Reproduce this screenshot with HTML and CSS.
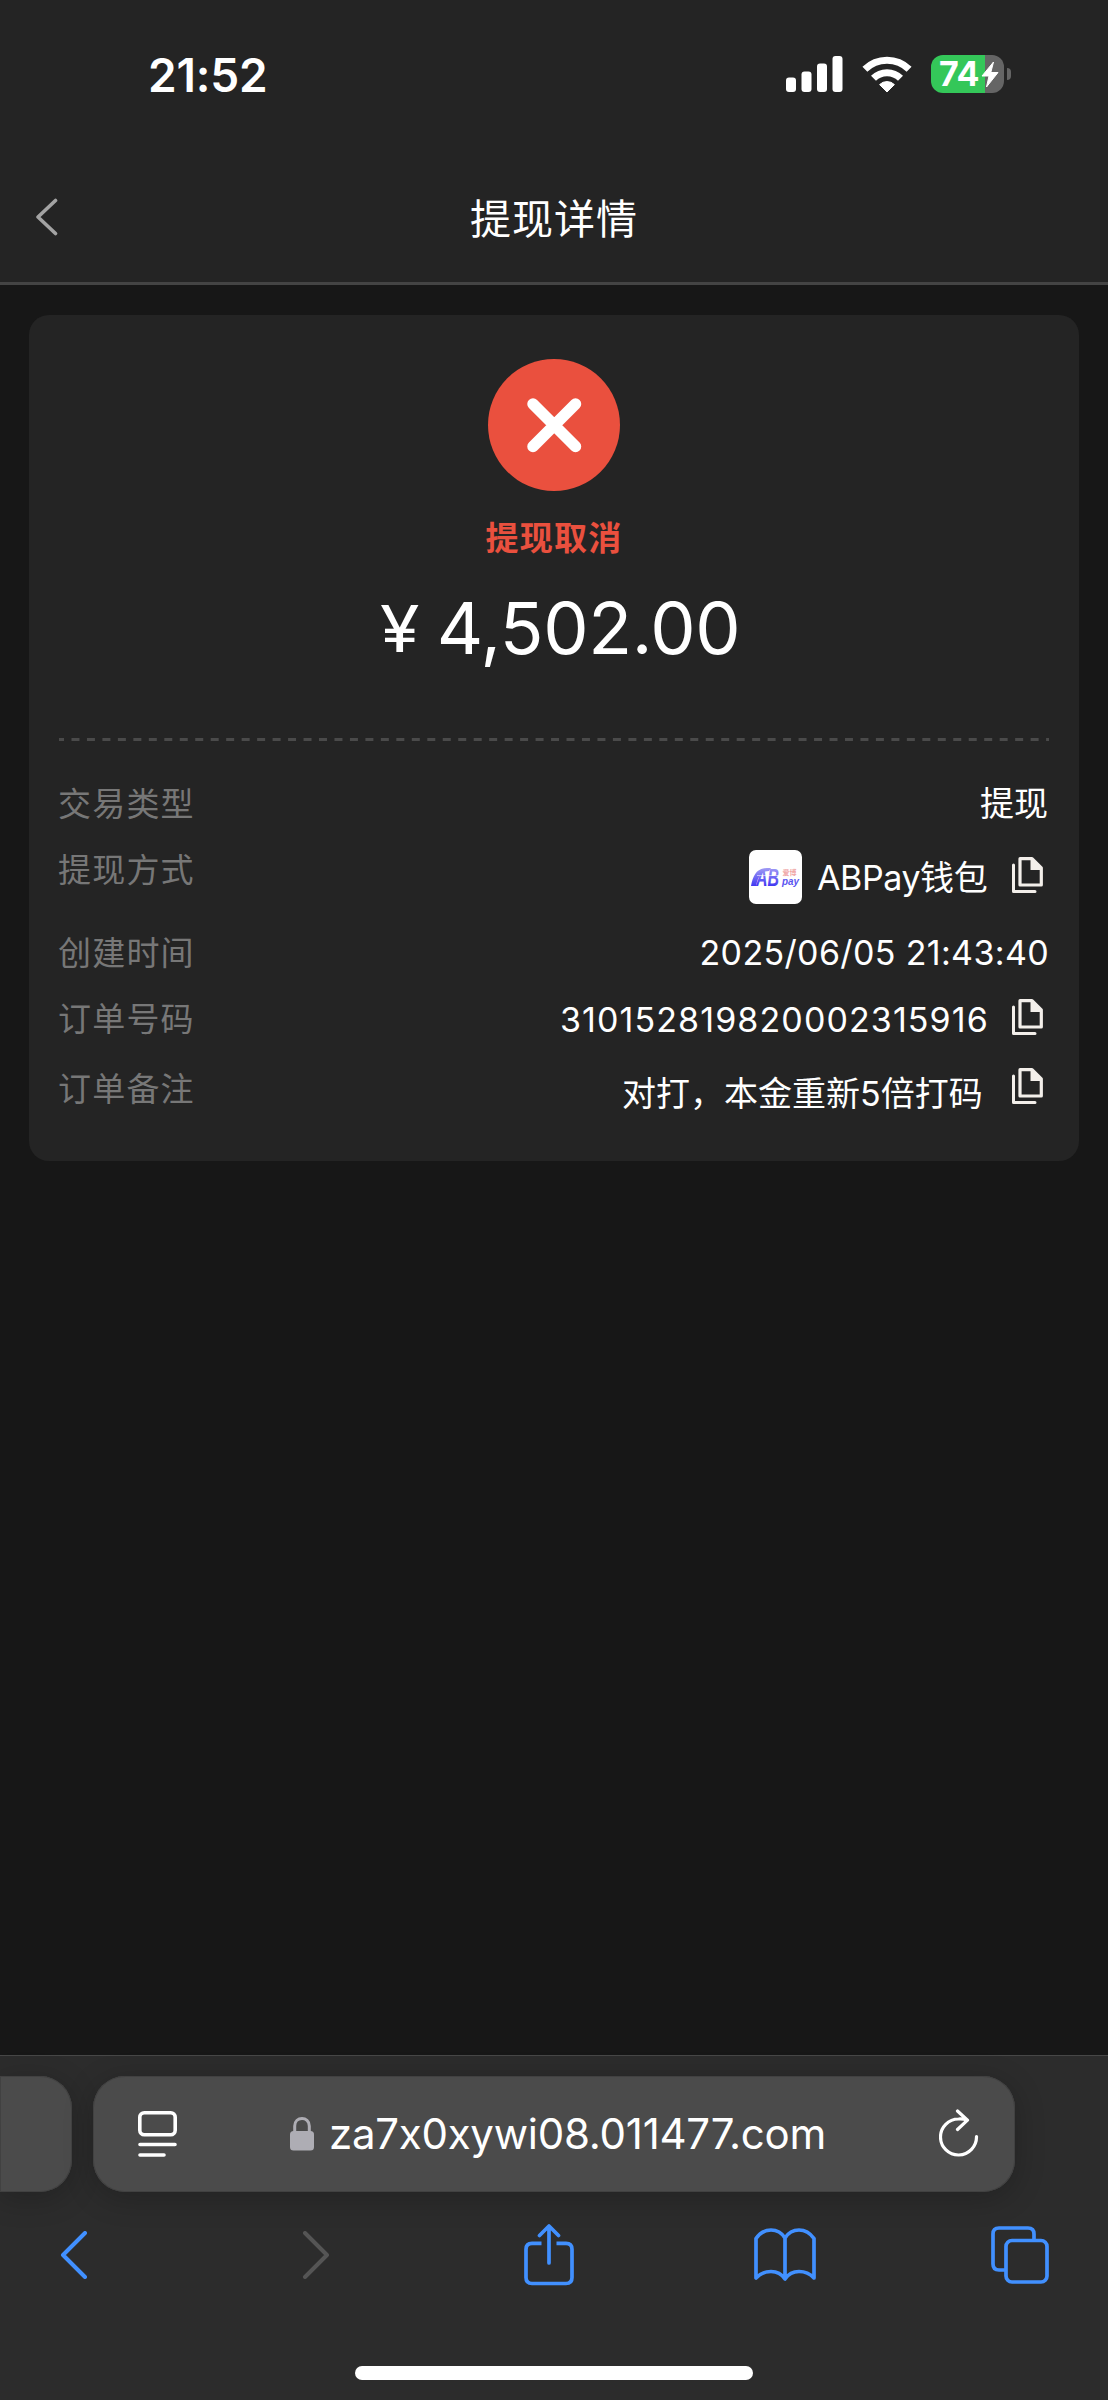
FILE: index.html
```html
<!DOCTYPE html>
<html lang="zh-CN">
<head>
<meta charset="utf-8">
<title>提现详情</title>
<link rel="stylesheet" href="styles.css">
</head>
<body>
<svg width="0" height="0" class="defs">
  <symbol id="copy" viewBox="0 0 31 36">
    <path d="M1.5 8V34.5H23" fill="none" stroke="currentColor" stroke-width="3" stroke-linecap="round" stroke-linejoin="round"/>
    <path d="M8 1.7H20L29.3 11V28H8Z" fill="none" stroke="currentColor" stroke-width="3.2" stroke-linejoin="round"/>
    <path d="M18.5 1.7H20.5L29.5 11V13H18.5Z" fill="currentColor"/>
  </symbol>
</svg>
<header class="top">
  <div class="status">
    <span class="time">21:52</span>
    <div class="status-icons">
      <svg class="signal" width="57" height="36" viewBox="0 0 57 36" fill="#fff">
        <rect x="0" y="21.500" width="10" height="14.500" rx="3"/><rect x="15.500" y="15.500" width="10" height="20.500" rx="3"/><rect x="31" y="7.500" width="10" height="28.500" rx="3"/><rect x="46.500" y="0" width="10" height="36" rx="3"/>
      </svg>
      <svg class="wifi" width="50" height="37" viewBox="0 0 50 37">
        <g fill="none" stroke="#fff" stroke-width="7"><path d="M2.900 13.200A31.500 31.500 0 0 1 47.100 13.200"/><path d="M11.500 22.300A19 19 0 0 1 38.500 22.300"/></g>
        <path d="M25 36L17.600 28.600A10.500 10.500 0 0 1 32.400 28.600Z" fill="#fff" stroke="#fff" stroke-width="1" stroke-linejoin="round"/>
      </svg>
      <div class="battery">
        <span class="level">74</span>
        <svg width="18" height="27" viewBox="0 0 18 27"><path d="M12.500 1L1 15H8L5.500 26L17 11.500H9.800Z" fill="#fff" stroke="#fff" stroke-linejoin="round"/></svg>
      </div>
      <span class="nub"></span>
    </div>
  </div>
  <nav class="title-bar">
    <svg width="24" height="38" viewBox="0 0 24 38"><path d="M20.500 2.500L3 19L20.500 35.500" fill="none" stroke="#a3a3a3" stroke-width="3.600" stroke-linecap="round" stroke-linejoin="round"/></svg>
    <h1>提现详情</h1>
    <span class="spacer"></span>
  </nav>
</header>
<main>
  <section class="card">
    <svg class="badge" width="132" height="132" viewBox="0 0 132 132"><circle cx="66" cy="66" r="66" fill="#ea503e"/><path d="M45 45L87.500 87.500M87.500 45L45 87.500" stroke="#fff" stroke-width="11.500" stroke-linecap="round"/></svg>
    <p class="state">提现取消</p>
    <p class="amount"><span class="yen">¥</span><span>4,502.00</span></p>
    <svg class="rule" width="990" height="3"><line x1="-3" y1="1.500" x2="990" y2="1.500" stroke="#4a4a4a" stroke-width="3" stroke-dasharray="8 7.470"/></svg>
    <dl>
      <div class="row r1"><dt>交易类型</dt><dd class="kind">提现</dd></div>
      <div class="row r2"><dt>提现方式</dt><dd>
        <svg class="wallet" width="53" height="54" viewBox="0 0 53 54">
          <defs><linearGradient id="g" gradientUnits="userSpaceOnUse" x1="0" y1="18" x2="0" y2="36"><stop offset="0" stop-color="#a09bf4"/><stop offset="1" stop-color="#4038f2"/></linearGradient></defs>
          <rect width="53" height="54" rx="7" fill="#fff"/>
          <path d="M2 36C4 25 8 18 18 18H22L20 21C12 21 9 27 7 36Z" fill="url(#g)"/>
          <text x="7" y="36" textLength="23" lengthAdjust="spacingAndGlyphs" class="logo-ab" fill="url(#g)">AB</text>
          <path d="M8 25.500H31" stroke="#fff" stroke-width="0.800" opacity="0.700"/>
          <text x="33" y="35" textLength="17" lengthAdjust="spacingAndGlyphs" class="logo-pay">pay</text>
          <text x="33.500" y="25" textLength="14" class="logo-cn">爱博</text>
        </svg>
        <span class="wname">ABPay钱包</span><svg class="copy" width="31" height="36"><use href="#copy"/></svg></dd></div>
      <div class="row r3"><dt>创建时间</dt><dd class="date">2025/06/05 21:43:40</dd></div>
      <div class="row r4"><dt>订单号码</dt><dd><span class="order">310152819820002315916</span><svg class="copy" width="31" height="36"><use href="#copy"/></svg></dd></div>
      <div class="row r5"><dt>订单备注</dt><dd><span class="note">对打，本金重新5倍打码</span><svg class="copy" width="31" height="36"><use href="#copy"/></svg></dd></div>
    </dl>
  </section>
</main>
<footer class="browser">
  <div class="tabs">
    <div class="tab prev"></div>
    <div class="tab address">
      <svg width="39" height="46" viewBox="0 0 39 46" fill="none" stroke="#fff" stroke-width="3.600" stroke-linecap="round"><rect x="1.800" y="1.800" width="35.400" height="22" rx="4.500"/><path d="M2 33.500H37M2 44H26"/></svg>
      <div class="url">
        <svg width="24" height="34" viewBox="0 0 24 34"><path d="M4.700 16V9C4.700 -1 19.300 -1 19.300 9V16" fill="none" stroke="#aeadb4" stroke-width="3"/><rect y="14" width="24" height="19.500" rx="3.500" fill="#aeadb4"/></svg>
        <span>za7x0xywi08.011477.com</span>
      </div>
      <svg class="reload" width="40" height="48" viewBox="0 0 40 48" fill="none" stroke="#fff" stroke-width="3.200" stroke-linecap="round" stroke-linejoin="round"><path d="M37.500 27.500A18 18 0 1 1 19.500 10C23 9.800 26 10.300 28 11M18.500 2L28.500 11.200L18.500 20.500"/></svg>
    </div>
  </div>
  <div class="toolbar">
    <svg width="28" height="48" viewBox="0 0 28 48"><path d="M25 2L3 24L25 46" fill="none" stroke="#4190ff" stroke-width="4" stroke-linecap="round" stroke-linejoin="round"/></svg>
    <svg class="forward" width="28" height="48" viewBox="0 0 28 48"><path d="M3 2L25 24L3 46" fill="none" stroke="#555" stroke-width="4" stroke-linecap="round" stroke-linejoin="round"/></svg>
    <svg class="share" width="50" height="62" viewBox="0 0 50 62" fill="none" stroke="#4190ff" stroke-width="3.700" stroke-linecap="round" stroke-linejoin="round"><path d="M17.500 19.300H8Q2 19.300 2 25.300V53.500Q2 59.500 8 59.500H42Q48 59.500 48 53.500V25.300Q48 19.300 42 19.300H32.500" stroke-linecap="butt"/><path d="M25 39V2.500M15.500 11.500L25 2L34.500 11.500"/></svg>
    <svg class="book" width="62" height="54" viewBox="0 0 62 54" fill="none" stroke="#4190ff" stroke-width="3.700" stroke-linejoin="round"><path d="M2 10.500Q8 2 17 2Q26 2 31 10Q36 2 45 2Q54 2 60 10.500V50Q54 43.500 45 43.500Q36 43.500 31 51Q26 43.500 17 43.500Q8 43.500 2 50ZM31 10V51"/></svg>
    <svg class="pages" width="58" height="58" viewBox="0 0 58 58" fill="none" stroke="#4190ff" stroke-width="3.700"><path d="M14 44H8Q2 44 2 38V8Q2 2 8 2H37Q43 2 43 8V14"/><rect x="15" y="14.500" width="41" height="41.500" rx="6"/></svg>
  </div>
  <div class="home"></div>
</footer>
</body>
</html>
```

FILE: styles.css
```css
* { box-sizing: border-box; margin: 0; padding: 0; }
body {
  width: 1108px;
  height: 2400px;
  display: flex;
  flex-direction: column;
  overflow: hidden;
  background: #171717;
  color: #fff;
  font-family: Inter, "Noto Sans CJK SC", sans-serif;
  font-size: 34px;
}
svg { display: block; flex: none; }
.defs { position: absolute; }

.top { height: 285px; background: #242424; border-bottom: 3px solid #444; }
.status {
  height: 150px;
  padding: 0 97px 0 148px;
  display: flex;
  justify-content: space-between;
}
.time { margin-top: 45px; font-size: 46px; line-height: 60px; font-weight: 600; letter-spacing: -0.2px; }
.status-icons { display: flex; align-items: center; height: 38px; margin-top: 55px; }
.wifi { margin-left: 19px; }
.battery {
  width: 73px;
  height: 38px;
  margin-left: 19px;
  padding-left: 8px;
  border-radius: 12px;
  display: flex;
  align-items: center;
  background: linear-gradient(90deg, #34c759 54px, #656565 54px);
}
.level { width: 42px; font-size: 34px; line-height: 38px; font-weight: 700; letter-spacing: -0.2px; }
.nub { width: 4px; height: 12px; margin-left: 3px; border-radius: 0 4px 4px 0; background: #656565; }
.title-bar {
  height: 133px;
  padding: 0 35px;
  display: flex;
  align-items: center;
  justify-content: space-between;
}
.title-bar h1 { padding-top: 4px; font-size: 41px; letter-spacing: 1px; font-weight: 400; line-height: 60px; }
.spacer { width: 24px; }

main { flex: 1; padding: 30px 29px 0; }
.card {
  height: 846px;
  padding: 44px 30px 0;
  border-radius: 20px;
  background: #242424;
  display: flex;
  flex-direction: column;
  align-items: center;
}
.state { margin-top: 22px; font-size: 33px; letter-spacing: 1.2px; line-height: 50px; font-weight: 700; color: #ea503e; }
.amount { display: flex; margin-top: 20px; padding-left: 12px; font-size: 72px; line-height: 90px; letter-spacing: -0.4px; }
.yen { width: 57px; font-size: 64px; line-height: 92px; transform: scaleX(1.12); transform-origin: 0 50%; }
.rule { margin-top: 63px; }
dl { width: 990px; }
.row { display: flex; justify-content: space-between; line-height: 50px; }
dt { margin-left: -1px; font-size: 33px; letter-spacing: 1.2px; color: #777; }
dd { display: flex; align-items: flex-start; }
.kind { margin-right: 1px; }
.r1 { margin-top: 38px; }
.r2 { margin-top: 16px; }
.r3 { margin-top: 33px; }
.r4 { margin-top: 16px; }
.r5 { margin-top: 20px; }
.copy { margin-right: 6px; color: #f3efea; }
.wallet { margin: 5px 15px 0 0; }
.wname { width: 195px; margin-top: 8px; letter-spacing: -0.4px; }
.r2, .r4, .r5 { height: 50px; }
.r2 .copy { margin-top: 12px; }
.r4 .copy { margin-top: 5px; }
.r5 .copy { margin-top: 4px; }
.date { letter-spacing: 0.35px; }
.order { width: 452px; margin-top: 1px; letter-spacing: 1.1px; }
.note { width: 390px; margin-top: 5px; }
.logo-ab { font: italic 900 24px "Liberation Sans", sans-serif; }
.logo-pay { font: italic 700 10px "Liberation Sans", sans-serif; fill: #5a54f0; }
.logo-cn { font: 700 7px "Noto Sans CJK SC", sans-serif; fill: #efa5a5; }

.browser { height: 345px; border-top: 1px solid #474747; background: #2c2c2c; }
.tabs { display: flex; gap: 21px; padding-top: 20px; }
.tab {
  height: 116px;
  background: #4b4b4b;
  box-shadow: 0 6px 30px rgba(0, 0, 0, 0.22), inset 0 0 0 1px #414141;
}
.prev { width: 72px; border-radius: 0 32px 32px 0; }
.address {
  width: 922px;
  padding: 0 36px 0 45px;
  border-radius: 32px;
  display: flex;
  align-items: center;
  justify-content: space-between;
}
.reload { margin-top: -3px; }
.url { display: flex; align-items: center; gap: 15px; font-size: 42px; line-height: 60px; letter-spacing: -0.25px; }
.toolbar { display: flex; align-items: center; height: 125px; padding-left: 60px; }
.forward { margin-left: 214px; }
.share { margin-left: 194px; }
.book { margin-left: 180px; }
.pages { margin-left: 175px; }
.home { width: 398px; height: 14px; margin: 49px auto 0; border-radius: 7px; background: #fff; }
```
